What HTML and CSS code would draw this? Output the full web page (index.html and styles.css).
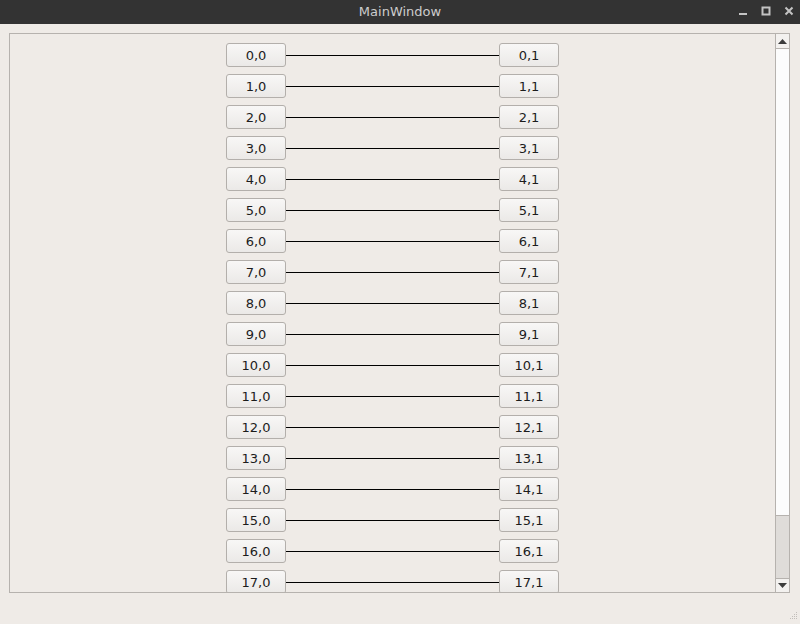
FILE: index.html
```html
<!DOCTYPE html>
<html>
<head>
<meta charset="utf-8">
<link rel="stylesheet" href="styles.css">
</head>
<body>
<div class="titlebar">
  <span class="title">MainWindow</span>
  <div class="controls">
    <svg class="ctl" width="10" height="10" viewBox="0 0 10 10"><rect x="1" y="7" width="8" height="2" fill="#c4c4c4"/></svg>
    <svg class="ctl" width="10" height="10" viewBox="0 0 10 10"><rect x="1.5" y="1.5" width="7" height="7" fill="none" stroke="#c4c4c4" stroke-width="2"/></svg>
    <svg class="ctl" width="10" height="10" viewBox="0 0 10 10"><path d="M1.5 1.5 L8.5 8.5 M8.5 1.5 L1.5 8.5" stroke="#c4c4c4" stroke-width="2"/></svg>
  </div>
</div>
<div class="main">
  <div class="frame">
    <div class="viewport">
      <div class="rows" id="rows"></div>
    </div>
    <div class="scrollbar">
      <div class="arrow up"><svg width="9" height="5" viewBox="0 0 9 5"><path d="M0 5 L4.5 0 L9 5 Z" fill="#3c3c3c"/></svg></div>
      <div class="track"></div>
      <div class="handle"></div>
      <div class="arrow down"><svg width="9" height="5" viewBox="0 0 9 5"><path d="M0 0 L4.5 5 L9 0 Z" fill="#3c3c3c"/></svg></div>
    </div>
  </div>
  <svg class="grip" width="10" height="10" viewBox="0 0 10 10">
    <g fill="#c2beba">
      <rect x="8" y="2" width="1" height="1"/>
      <rect x="6" y="4" width="1" height="1"/><rect x="8" y="4" width="1" height="1"/>
      <rect x="4" y="6" width="1" height="1"/><rect x="6" y="6" width="1" height="1"/><rect x="8" y="6" width="1" height="1"/>
      <rect x="2" y="8" width="1" height="1"/><rect x="4" y="8" width="1" height="1"/><rect x="6" y="8" width="1" height="1"/><rect x="8" y="8" width="1" height="1"/>
    </g>
  </svg>
</div>
<script src="script.js"></script>
</body>
</html>
```
FILE: script.js
```js
var rows = document.getElementById('rows');
for (var i = 0; i < 18; i++) {
  var r = document.createElement('div');
  r.className = 'row';
  r.innerHTML = '<div class="btn">' + i + ',0</div><div class="line"></div><div class="btn">' + i + ',1</div>';
  rows.appendChild(r);
}
```
FILE: styles.css
```css
html, body {
  margin: 0;
  padding: 0;
  background: #efebe7;
  font-family: "DejaVu Sans", sans-serif;
  width: 800px;
  height: 624px;
  overflow: hidden;
}
.titlebar {
  height: 24px;
  background: #333333;
  position: relative;
  display: flex;
  align-items: center;
  justify-content: center;
}
.title {
  color: #cccccc;
  font-size: 13px;
  line-height: 24px;
}
.controls {
  position: absolute;
  right: 6px;
  top: 6px;
  display: flex;
  gap: 13px;
}
.ctl {
  display: block;
}
.main {
  position: relative;
  height: 600px;
  padding: 9px 10px 0 9px;
  box-sizing: border-box;
}
.frame {
  height: 560px;
  border: 1px solid #b6b2ae;
  box-sizing: border-box;
  display: flex;
  overflow: hidden;
}
.viewport {
  flex: 1;
  overflow: hidden;
}
.rows {
  display: flex;
  flex-direction: column;
  gap: 7px;
  padding: 9px 0 0 216px;
}
.row {
  display: flex;
  align-items: center;
  height: 24px;
}
.btn {
  width: 60px;
  height: 24px;
  box-sizing: border-box;
  border: 1px solid #b3afab;
  border-radius: 3px;
  background: linear-gradient(#f8f7f6, #ebe9e7);
  font-size: 13px;
  color: #1c1c1c;
  display: flex;
  align-items: center;
  justify-content: center;
  flex-shrink: 0;
}
.line {
  width: 213px;
  height: 1px;
  background: #000;
}
.scrollbar {
  width: 14px;
  border-left: 1px solid #b6b2ae;
  box-sizing: border-box;
  display: flex;
  flex-direction: column;
  background: #fbfbfa;
}
.arrow {
  height: 14px;
  display: flex;
  align-items: center;
  justify-content: center;
  background: #f3f1ef;
}
.arrow.up {
  border-bottom: 1px solid #b6b2ae;
}
.arrow.down {
  border-top: 1px solid #b6b2ae;
  height: 13px;
}
.track {
  flex: 1;
  background: #fcfcfc;
}
.handle {
  height: 62px;
  background: #dfdcd9;
  border-top: 1px solid #b6b2ae;
}
.grip {
  position: absolute;
  right: 2px;
  bottom: 4px;
}
```
